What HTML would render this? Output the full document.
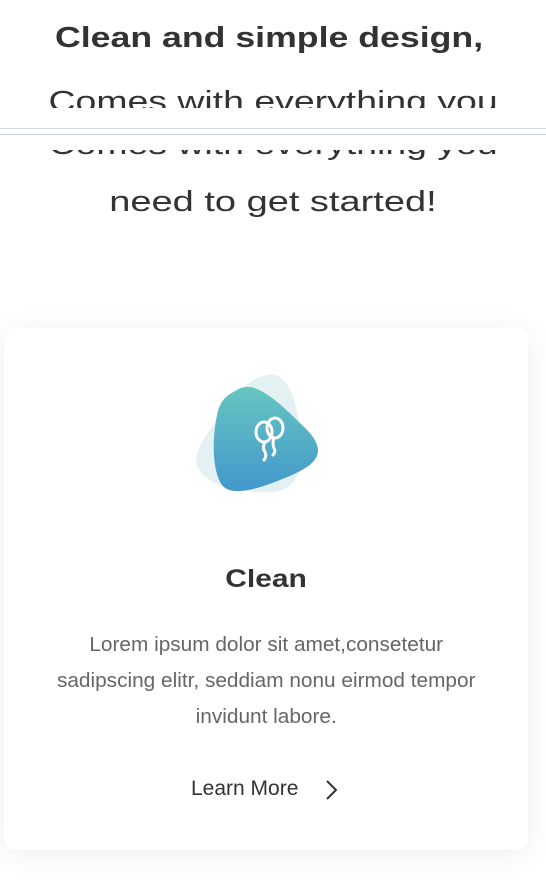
<!DOCTYPE html><html><head><style>
body{margin:0;width:546px;height:890px;background:#fff;position:relative;overflow:hidden;font-family:"Liberation Sans",sans-serif;color:#333}
.a{position:absolute;left:0;width:546px;text-align:center;white-space:nowrap}
.c{left:4px;width:524px}
.s{display:inline-block;transform:scaleX(1.29)}
.clip{position:absolute;left:0;width:546px;overflow:hidden}
.card{position:absolute;left:4px;top:328px;width:524px;height:522px;background:#fff;border-radius:12px;box-shadow:0 4px 30px rgba(0,0,0,.07)}
</style></head><body>
<div class="a" style="top:22px;font-size:29px;font-weight:bold;left:-4px"><span class="s" style="transform:scaleX(1.23)">Clean and simple design,</span></div>
<div class="clip" style="top:0;height:108px"><div class="a" style="top:86px;font-size:29px"><span class="s">Comes with everything you</span></div></div>
<div style="position:absolute;left:0;top:128px;width:546px;height:1px;background:#cfd8e0"></div>
<div style="position:absolute;left:0;top:134px;width:546px;height:1px;background:#cfd8e0"></div>
<div class="clip" style="top:150px;height:120px"><div class="a" style="top:-21px;font-size:29px"><span class="s">Comes with everything you</span></div><div class="a" style="top:36px;font-size:29px"><span class="s" style="transform:scaleX(1.31)">need to get started!</span></div></div>
<div class="card"></div>
<svg style="position:absolute;left:192px;top:370px" width="135" height="130" viewBox="0 0 135 130">
<defs><linearGradient id="g" x1="0" y1="0" x2="0" y2="1"><stop offset="0" stop-color="#66c6c0"/><stop offset="1" stop-color="#4397cc"/></linearGradient></defs>
<path d="M75 5 C95 0 105 30 108 60 C110 95 110 120 80 122 C50 124 10 115 5 95 C0 75 30 45 50 20 C58 10 65 7 75 5Z" fill="#e3f1f3"/>
<path d="M45 20 C60 10 80 25 110 55 C135 78 130 92 100 105 C70 118 40 128 30 115 C20 100 20 70 25 45 C28 30 35 25 45 20Z" fill="url(#g)"/>
<g fill="none" stroke="#fff" stroke-width="3" stroke-linecap="round"><ellipse cx="72" cy="62" rx="8" ry="10"/><ellipse cx="83" cy="58" rx="8" ry="10"/><path d="M73 72 q-3 6 0 10 q2 4 -1 8"/><path d="M82 68 q-2 6 0 10 q2 4 -1 7"/></g>
</svg>
<div class="a c" style="top:565px;font-size:25px;font-weight:bold"><span class="s" style="transform:scaleX(1.2)">Clean</span></div>
<div class="a c" style="top:627px;font-size:20px;color:#666;line-height:36px"><span class="s" style="transform:scaleX(1.04)">Lorem ipsum dolor sit amet,consetetur<br>sadipscing elitr, seddiam nonu eirmod tempor<br>invidunt labore.</span></div>
<div style="position:absolute;left:191px;top:777px;font-size:21px;color:#333">Learn More</div>
<svg style="position:absolute;left:322px;top:778px" width="18" height="24"><path d="M5 3 L14 12 L5 21" fill="none" stroke="#333" stroke-width="2"/></svg>
</body></html>
